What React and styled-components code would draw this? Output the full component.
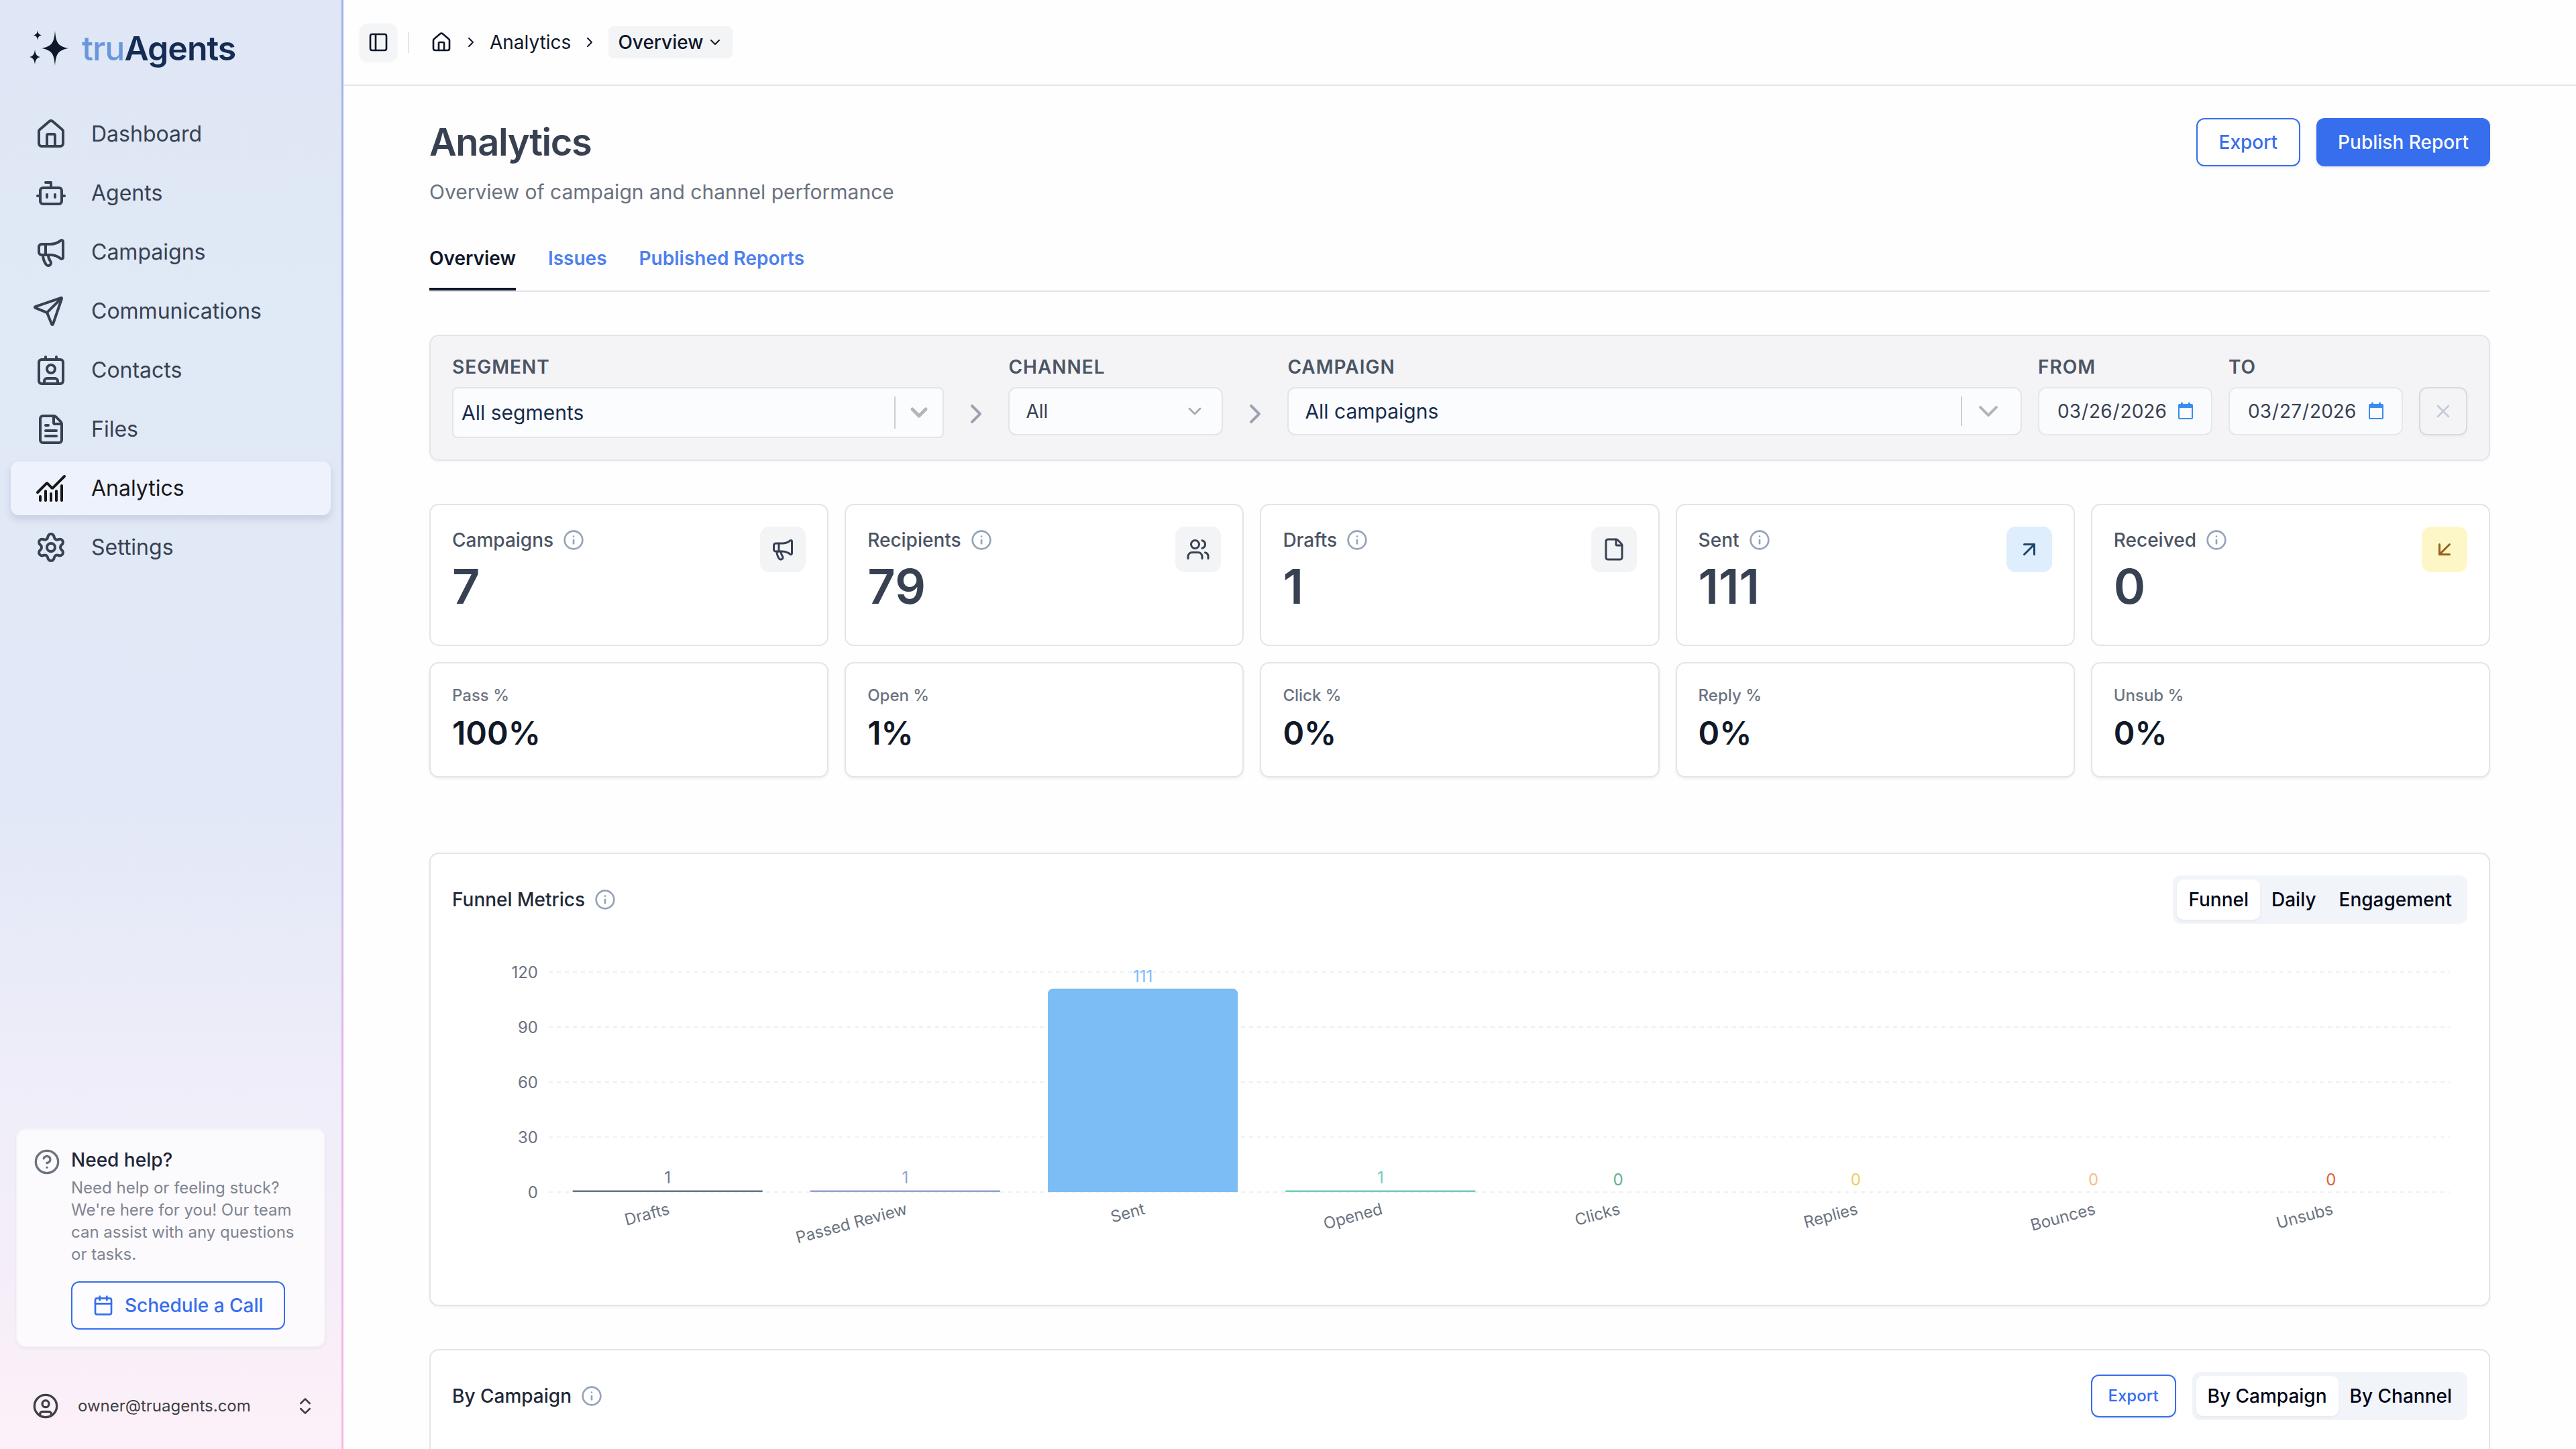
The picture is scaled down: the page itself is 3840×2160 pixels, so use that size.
import styled, { createGlobalStyle } from "styled-components";
import {
  ArrowDownLeft,
  ArrowUpRight,
  Bot,
  Calendar,
  ChartNoAxesCombined,
  ChevronDown,
  ChevronRight,
  ChevronsUpDown,
  CircleHelp,
  CircleUser,
  Contact,
  File,
  FileText,
  House,
  Info,
  Megaphone,
  PanelLeft,
  Send,
  Settings,
  Users,
  X,
} from "lucide-react";

const navItems = [
  { label: "Dashboard", icon: House },
  { label: "Agents", icon: Bot },
  { label: "Campaigns", icon: Megaphone },
  { label: "Communications", icon: Send, viewBox: "2 0 24 24" },
  { label: "Contacts", icon: Contact },
  { label: "Files", icon: FileText },
  { label: "Analytics", icon: ChartNoAxesCombined, active: true },
  { label: "Settings", icon: Settings },
];

const totals = [
  { label: "Campaigns", value: "7", icon: Megaphone },
  { label: "Recipients", value: "79", icon: Users },
  { label: "Drafts", value: "1", icon: File },
  { label: "Sent", value: "111", icon: ArrowUpRight, bg: "#deeefc", fg: "#1e4468" },
  { label: "Received", value: "0", icon: ArrowDownLeft, bg: "#fdf7c8", fg: "#97601f" },
];

const rates = [
  { label: "Pass %", value: "100%" },
  { label: "Open %", value: "1%" },
  { label: "Click %", value: "0%" },
  { label: "Reply %", value: "0%" },
  { label: "Unsub %", value: "0%" },
];

const funnel = [
  { label: "Drafts", value: 1, color: "#69748f" },
  { label: "Passed Review", value: 1, color: "#93a3cb" },
  { label: "Sent", value: 111, color: "#7cbdf5" },
  { label: "Opened", value: 1, color: "#70cdbb" },
  { label: "Clicks", value: 0, color: "#5cb48b" },
  { label: "Replies", value: 0, color: "#f2cb5c" },
  { label: "Bounces", value: 0, color: "#f5be84" },
  { label: "Unsubs", value: 0, color: "#dc5f3c" },
];

const ticks = [120, 90, 60, 30, 0];

export default function App() {
  return (
    <>
      <GlobalStyle />
      <Shell>
        <Sidebar />
        <Main>
          <Topbar />
          <Content>
            <PageHeader>
              <Title>Analytics</Title>
              <ButtonRow>
                <OutlineButton type="button">Export</OutlineButton>
                <PrimaryButton type="button">Publish Report</PrimaryButton>
              </ButtonRow>
            </PageHeader>
            <Subtitle>Overview of campaign and channel performance</Subtitle>
            <Tabs>
              <Tab href="#overview" $active>
                Overview
              </Tab>
              <Tab href="#issues">Issues</Tab>
              <Tab href="#reports">Published Reports</Tab>
            </Tabs>
            <Filters />
            <StatGrid>
              {totals.map((item) => (
                <TotalCard key={item.label} {...item} />
              ))}
              {rates.map((item) => (
                <RateCard key={item.label}>
                  <RateLabel>{item.label}</RateLabel>
                  <RateValue>{item.value}</RateValue>
                </RateCard>
              ))}
            </StatGrid>
            <FunnelPanel>
              <PanelHeader>
                <PanelTitle>
                  Funnel Metrics
                  <InfoIcon />
                </PanelTitle>
                <Segmented>
                  <SegmentButton type="button" $active>
                    Funnel
                  </SegmentButton>
                  <SegmentButton type="button">Daily</SegmentButton>
                  <SegmentButton type="button">Engagement</SegmentButton>
                </Segmented>
              </PanelHeader>
              <FunnelChart />
            </FunnelPanel>
            <CampaignPanel>
              <PanelHeader>
                <PanelTitle>
                  By Campaign
                  <InfoIcon />
                </PanelTitle>
                <ButtonRow>
                  <OutlineButton type="button" $small>
                    Export
                  </OutlineButton>
                  <Segmented>
                    <SegmentButton type="button" $active>
                      By Campaign
                    </SegmentButton>
                    <SegmentButton type="button">By Channel</SegmentButton>
                  </Segmented>
                </ButtonRow>
              </PanelHeader>
            </CampaignPanel>
          </Content>
        </Main>
      </Shell>
    </>
  );
}

function Sidebar() {
  return (
    <StyledSidebar>
      <Brand href="#home">
        <Sparkles />
        <BrandName>
          <span>tru</span>Agents
        </BrandName>
      </Brand>
      <Nav>
        {navItems.map(({ label, icon: Icon, active, viewBox = "0 0 24 24" }) => (
          <NavLink key={label} href={`#${label.toLowerCase()}`} $active={active}>
            <Icon size={48} viewBox={viewBox} overflow="visible" />
            {label}
          </NavLink>
        ))}
      </Nav>
      <NavDivider />
      <HelpCard>
        <CircleHelp size={40} />
        <HelpBody>
          <HelpTitle>Need help?</HelpTitle>
          <HelpText>
            Need help or feeling stuck? We're here for you! Our team can assist
            with any questions or tasks.
          </HelpText>
          <CallButton type="button">
            <Calendar size={32} />
            Schedule a Call
          </CallButton>
        </HelpBody>
      </HelpCard>
      <UserButton type="button">
        <CircleUser size={40} />
        <span>owner@truagents.com</span>
        <ChevronsUpDown size={32} />
      </UserButton>
    </StyledSidebar>
  );
}

function Sparkles() {
  return (
    <svg width="60" height="56" viewBox="0 0 60 56" fill="#0f172a" aria-hidden="true">
      <path d="M40 2C41.500 19 44 25 60 28C44 31 41.500 37 40 54C38.500 37 36 31 20 28C36 25 38.500 19 40 2Z" />
      <path d="M14 1C14.700 6 16 7.500 20 8.500C16 9.500 14.700 11 14 16C13.300 11 12 9.500 8 8.500C12 7.500 13.300 6 14 1Z" />
      <path d="M10 30C10.900 37 12.500 39.500 18 41C12.500 42.500 10.900 45 10 52C9.100 45 7.500 42.500 2 41C7.500 39.500 9.100 37 10 30Z" />
    </svg>
  );
}

function Topbar() {
  return (
    <StyledTopbar>
      <ToggleButton type="button" aria-label="Toggle sidebar">
        <PanelLeft size={32} />
      </ToggleButton>
      <TopbarDivider />
      <Breadcrumbs aria-label="Breadcrumb">
        <Crumb href="#home" aria-label="Home">
          <House size={32} />
        </Crumb>
        <ChevronRight size={24} />
        <Crumb href="#analytics">Analytics</Crumb>
        <ChevronRight size={24} />
        <CrumbButton type="button">
          Overview
          <ChevronDown size={24} />
        </CrumbButton>
      </Breadcrumbs>
    </StyledTopbar>
  );
}

function Filters() {
  return (
    <FilterBar>
      <Field>
        <FieldLabel htmlFor="segment">Segment</FieldLabel>
        <SelectBox $tall>
          <Select id="segment" $large>
            <option>All segments</option>
          </Select>
          <SelectDivider />
          <SelectArrow $before={15} $after={15} $color="#b4b6ba">
            <ChevronDown size={40} strokeWidth={3} />
          </SelectArrow>
        </SelectBox>
      </Field>
      <FilterArrow>
        <ChevronRight size={48} />
      </FilterArrow>
      <Field>
        <FieldLabel htmlFor="channel">Channel</FieldLabel>
        <SelectBox $padded>
          <Select id="channel">
            <option>All</option>
          </Select>
          <SelectArrow $before={24} $after={24} $color="#a3a9b4">
            <ChevronDown size={32} />
          </SelectArrow>
        </SelectBox>
      </Field>
      <FilterArrow>
        <ChevronRight size={48} />
      </FilterArrow>
      <Field>
        <FieldLabel htmlFor="campaign">Campaign</FieldLabel>
        <SelectBox $padded>
          <Select id="campaign" $large>
            <option>All campaigns</option>
          </Select>
          <SelectDivider />
          <SelectArrow $before={15} $after={24} $color="#b4b6ba">
            <ChevronDown size={48} />
          </SelectArrow>
        </SelectBox>
      </Field>
      <DateField id="from" label="From" value="2026-03-26" />
      <DateField id="to" label="To" value="2026-03-27" />
      <ClearButton type="button" aria-label="Clear dates" disabled>
        <X size={32} />
      </ClearButton>
    </FilterBar>
  );
}

function DateField({ id, label, value }) {
  return (
    <Field>
      <FieldLabel htmlFor={id}>{label}</FieldLabel>
      <DateBox>
        <DateInput id={id} type="date" defaultValue={value} />
        <svg width="24" height="26" viewBox="0 0 24 26" fill="#3b8cf1" aria-hidden="true">
          <path d="M5 0h3v2h8V0h3v2h2a2 2 0 0 1 2 2v19a2 2 0 0 1-2 2H3a2 2 0 0 1-2-2V4a2 2 0 0 1 2-2h2zM3 8v15h18V8z" />
        </svg>
      </DateBox>
    </Field>
  );
}

function TotalCard({ label, value, icon: Icon, bg, fg }) {
  return (
    <StyledTotalCard>
      <div>
        <TotalLabel>
          {label}
          <InfoIcon />
        </TotalLabel>
        <TotalValue>{value}</TotalValue>
      </div>
      <IconBadge $bg={bg} $fg={fg}>
        <Icon size={36} />
      </IconBadge>
    </StyledTotalCard>
  );
}

function InfoIcon() {
  return <Info size={32} color="#94a3b8" aria-label="More information" />;
}

function FunnelChart() {
  const top = 40;
  const bottom = 368;
  const slot = 100 / funnel.length;
  const scale = (value) => bottom - ((bottom - top) * value) / 120;

  return (
    <ChartArea>
      <ChartSvg role="img" aria-label="Funnel metrics bar chart">
        {ticks.map((tick) => (
          <g key={tick}>
            <line
              x1="0"
              x2="100%"
              y1={scale(tick)}
              y2={scale(tick)}
              stroke="#eef0f2"
              strokeWidth="2"
              strokeDasharray="6 6"
            />
            <text x="-16" y={scale(tick) + 9} textAnchor="end">
              {tick}
            </text>
          </g>
        ))}
        {funnel.map(({ label, value, color }, index) => {
          const y = scale(value);
          const radius = value > 1 ? 8 : 0;
          return (
            <g key={label}>
              {value > 0 && (
                <svg
                  x={`${slot * (index + 0.1)}%`}
                  y={y}
                  width={`${slot * 0.8}%`}
                  height={bottom - y}
                >
                  <rect
                    width="100%"
                    height={bottom - y + radius}
                    rx={radius}
                    fill={color}
                  />
                </svg>
              )}
              <svg x={`${slot * (index + 0.5)}%`} y={y} overflow="visible">
                <text y="-10" textAnchor="middle" fill={color}>
                  {value}
                </text>
              </svg>
              <svg x={`${slot * (index + 0.5)}%`} y={bottom + 16} overflow="visible">
                <text y="17" textAnchor="end" transform="rotate(-15)">
                  {label}
                </text>
              </svg>
            </g>
          );
        })}
      </ChartSvg>
    </ChartArea>
  );
}

const GlobalStyle = createGlobalStyle`
  * {
    box-sizing: border-box;
  }

  body {
    margin: 0;
    background: #fefefe;
    color: #0f172a;
    font-family: Inter, "Liberation Sans", sans-serif;
    font-size: 28px;
    line-height: 40px;
  }

  button, input, select {
    font: inherit;
    color: inherit;
    margin: 0;
  }

  a {
    color: inherit;
    text-decoration: none;
  }

  svg {
    flex-shrink: 0;
  }
`;

const Shell = styled.div`
  display: flex;
  height: 100vh;
`;

const StyledSidebar = styled.aside`
  width: 512px;
  flex-shrink: 0;
  display: flex;
  flex-direction: column;
  border-right: 3px solid;
  border-image: linear-gradient(#9db4e8, #b9b6ec 35%, #e6b8e8 78%, #f5b9e0) 1;
  background: linear-gradient(
    #dfe6f5,
    #e0e9f6 22%,
    #e2e8f7 55%,
    #f0eef9 77%,
    #f6eef8 90%,
    #fdf1f9
  );
`;

const Brand = styled.a`
  display: flex;
  align-items: center;
  gap: 20px;
  height: 144px;
  padding-left: 42px;
`;

const BrandName = styled.span`
  font-size: 50px;
  font-weight: 600;
  letter-spacing: -1px;
  color: #152c54;

  span {
    font-weight: 500;
    color: #6a97dc;
  }
`;

const Nav = styled.nav`
  display: flex;
  flex-direction: column;
  gap: 8px;
  padding: 16px 16px 0;
`;

const NavLink = styled.a`
  display: flex;
  align-items: center;
  gap: 36px;
  height: 80px;
  padding-left: 36px;
  border-radius: 12px;
  font-size: 32px;
  color: ${({ $active }) => ($active ? "#18181b" : "#374151")};
  background: ${({ $active }) => ($active ? "#eef2fc" : "transparent")};
  box-shadow: ${({ $active }) =>
    $active ? "0 6px 12px rgba(30, 41, 80, 0.14)" : "none"};
`;

const NavDivider = styled.div`
  height: 2px;
  margin: 16px 16px auto;
  background: #e6e5ef;
`;

const HelpCard = styled.section`
  display: flex;
  gap: 16px;
  margin: 0 24px;
  padding: 28px 24px 24px;
  border: 2px solid #f5f3f8;
  border-radius: 14px;
  background: rgba(255, 255, 255, 0.7);
  box-shadow: 0 2px 4px rgba(60, 40, 80, 0.06);
  color: #6b7280;
`;

const HelpBody = styled.div`
  flex: 1;
`;

const HelpTitle = styled.h2`
  margin: 0 0 8px;
  font-size: 28px;
  font-weight: 500;
  line-height: 34px;
  color: #1f2638;
`;

const HelpText = styled.p`
  margin: 0 0 24px;
  font-size: 24px;
  line-height: 33px;
  color: #7f8490;
`;

const CallButton = styled.button`
  display: flex;
  align-items: center;
  gap: 16px;
  height: 72px;
  padding: 0 30px;
  border: 2px solid #366eed;
  border-radius: 12px;
  background: rgba(255, 255, 255, 0.4);
  color: #366eed;
  font-weight: 500;
  white-space: nowrap;
`;

const UserButton = styled.button`
  display: flex;
  align-items: center;
  gap: 28px;
  height: 128px;
  margin-top: 24px;
  padding: 0 38px 0 48px;
  border: none;
  background: none;
  color: #3f3f46;
  font-size: 24px;

  span {
    flex: 1;
    text-align: left;
  }
`;

const Main = styled.main`
  flex: 1;
  min-width: 0;
  display: flex;
  flex-direction: column;
`;

const StyledTopbar = styled.header`
  display: flex;
  align-items: center;
  flex-shrink: 0;
  gap: 16px;
  height: 128px;
  padding-left: 24px;
  border-bottom: 2px solid #e2e6ea;
`;

const ToggleButton = styled.button`
  display: flex;
  align-items: center;
  justify-content: center;
  width: 56px;
  height: 56px;
  border: none;
  border-radius: 12px;
  background: #f4f5f7;
  box-shadow: 0 2px 4px rgba(0, 0, 0, 0.04);
`;

const TopbarDivider = styled.div`
  width: 2px;
  height: 32px;
  background: #e2e6ea;
`;

const Breadcrumbs = styled.nav`
  display: flex;
  align-items: center;
  gap: 16px;
  padding-left: 16px;
`;

const Crumb = styled.a`
  display: flex;
`;

const CrumbButton = styled.button`
  display: flex;
  align-items: center;
  gap: 6px;
  height: 48px;
  padding: 0 14px;
  border: none;
  border-radius: 8px;
  background: #f3f4f6;
  font-weight: 500;
`;

const Content = styled.div`
  flex: 1;
  overflow-y: auto;
  scrollbar-width: none;
  padding: 48px 128px;
`;

const PageHeader = styled.div`
  display: flex;
  align-items: center;
  justify-content: space-between;
`;

const Title = styled.h1`
  margin: 0;
  font-size: 56px;
  font-weight: 600;
  line-height: 72px;
  letter-spacing: -0.025em;
  color: #374151;
`;

const Subtitle = styled.p`
  margin: 16px 0 0;
  font-size: 30px;
  line-height: 44px;
  color: #6b7280;
`;

const ButtonRow = styled.div`
  display: flex;
  align-items: center;
  gap: 24px;
`;

const OutlineButton = styled.button`
  height: ${({ $small }) => ($small ? "64px" : "72px")};
  padding: ${({ $small }) => ($small ? "0 24px" : "0 32px")};
  border: 2px solid #366eed;
  border-radius: 12px;
  background: #ffffff;
  box-shadow: 0 2px 4px rgba(0, 0, 0, 0.06);
  color: #366eed;
  font-size: ${({ $small }) => ($small ? "24px" : "28px")};
  font-weight: 500;
`;

const PrimaryButton = styled.button`
  height: 72px;
  padding: 0 32px;
  border: none;
  border-radius: 12px;
  background: #366eed;
  box-shadow: 0 2px 4px rgba(0, 0, 0, 0.1);
  color: #f8fafc;
  font-weight: 500;
`;

const Tabs = styled.nav`
  display: flex;
  gap: 48px;
  margin-top: 57px;
  border-bottom: 2px solid #e1e4e8;
`;

const Tab = styled.a`
  padding-bottom: 24px;
  border-bottom: 4px solid ${({ $active }) => ($active ? "#0f172a" : "transparent")};
  color: ${({ $active }) => ($active ? "#0f172a" : "#4d80f0")};
  font-weight: 600;
`;

const FilterBar = styled.section`
  display: grid;
  grid-template-columns: 67fr 48px 320px 48px 100fr 260px 260px 72px;
  gap: 24px;
  margin-top: 64px;
  padding: 32px;
  border: 2px solid #e2e5ea;
  border-radius: 14px;
  background: #f4f4f7;
  box-shadow: 0 2px 4px rgba(0, 0, 0, 0.04);
`;

const Field = styled.div`
  min-width: 0;
`;

const FieldLabel = styled.label`
  display: block;
  margin-bottom: 16px;
  font-size: 28px;
  font-weight: 600;
  line-height: 28px;
  letter-spacing: 1px;
  text-transform: uppercase;
  color: #4b5563;
`;

const SelectBox = styled.div`
  display: flex;
  align-items: center;
  height: ${({ $tall }) => ($tall ? "76px" : "72px")};
  padding-left: ${({ $padded }) => ($padded ? "24px" : "12px")};
  border: 2px solid #e0e4ec;
  border-radius: ${({ $tall }) => ($tall ? "8px" : "12px")};
  background: #fbfcfe;
`;

const Select = styled.select`
  flex: 1;
  min-width: 0;
  padding: 0;
  border: none;
  outline: none;
  appearance: none;
  background: none;
  font-size: ${({ $large }) => ($large ? "30px" : "28px")};
  color: ${({ $large }) => ($large ? "#172b4d" : "#374151")};
`;

const SelectDivider = styled.div`
  align-self: stretch;
  width: 2px;
  margin: 12px 0;
  background: #cccfd3;
`;

const SelectArrow = styled.span`
  display: flex;
  padding-left: ${({ $before }) => $before}px;
  padding-right: ${({ $after }) => $after}px;
  color: ${({ $color }) => $color};
  pointer-events: none;
`;

const FilterArrow = styled.span`
  display: flex;
  align-self: end;
  padding-bottom: 12px;
  color: #9ca3af;
`;

const DateBox = styled.div`
  display: flex;
  align-items: center;
  height: 72px;
  padding: 0 26px;
  border: 2px solid #e2e8f0;
  border-radius: 12px;
  background: #fafbfd;
`;

const DateInput = styled.input`
  flex: 1;
  min-width: 0;
  padding: 0;
  border: none;
  outline: none;
  background: none;
  color: #374151;

  &::-webkit-calendar-picker-indicator {
    display: none;
  }

  &::-webkit-datetime-edit {
    padding: 0;
  }
`;

const ClearButton = styled.button`
  display: flex;
  align-items: center;
  justify-content: center;
  height: 72px;
  margin-top: 44px;
  padding: 0;
  border: 2px solid #d8dade;
  border-radius: 12px;
  background: #f4f4f6;
  box-shadow: 0 2px 4px rgba(0, 0, 0, 0.04);
  color: #c4cbd5;
`;

const StatGrid = styled.section`
  display: grid;
  grid-template-columns: repeat(5, 1fr);
  gap: 24px;
  margin-top: 64px;
`;

const Card = styled.section`
  border: 2px solid #e2e5e9;
  border-radius: 14px;
  background: #ffffff;
`;

const StyledTotalCard = styled(Card)`
  display: flex;
  align-items: flex-start;
  justify-content: space-between;
  padding: 32px 32px 42px;
`;

const TotalLabel = styled.div`
  display: flex;
  align-items: center;
  gap: 14px;
  margin-bottom: 4px;
  font-size: 28px;
  font-weight: 500;
  color: #4b5563;
`;

const TotalValue = styled.div`
  font-size: 72px;
  font-weight: 600;
  line-height: 90px;
  color: #374151;
`;

const IconBadge = styled.span`
  display: flex;
  padding: 16px;
  border-radius: 14px;
  background: ${({ $bg }) => $bg || "#f3f4f6"};
  color: ${({ $fg }) => $fg || "#374151"};
`;

const RateCard = styled(Card)`
  padding: 32px;
  box-shadow: 0 2px 4px rgba(0, 0, 0, 0.06);
`;

const RateLabel = styled.div`
  margin-bottom: 8px;
  font-size: 24px;
  font-weight: 500;
  line-height: 32px;
  color: #6b7280;
`;

const RateValue = styled.div`
  font-size: 48px;
  font-weight: 600;
  line-height: 64px;
  color: #111827;
`;

const FunnelPanel = styled(Card)`
  margin-top: 112px;
  padding: 32px;
  box-shadow: 0 2px 4px rgba(0, 0, 0, 0.05);
`;

const CampaignPanel = styled(Card)`
  min-height: 400px;
  margin-top: 64px;
  padding: 32px;
`;

const PanelHeader = styled.div`
  display: flex;
  align-items: center;
  justify-content: space-between;
`;

const PanelTitle = styled.h2`
  display: flex;
  align-items: center;
  gap: 14px;
  margin: 0;
  font-size: 28px;
  font-weight: 500;
  color: #1f2937;
`;

const Segmented = styled.div`
  display: flex;
  height: 72px;
  padding: 6px;
  border-radius: 12px;
  background: #f1f4f9;
`;

const SegmentButton = styled.button`
  padding: 0 17px;
  border: none;
  border-radius: 10px;
  background: ${({ $active }) => ($active ? "#ffffff" : "transparent")};
  box-shadow: ${({ $active }) => ($active ? "0 2px 4px rgba(0, 0, 0, 0.05)" : "none")};
  color: #020617;
  font-weight: 500;
`;

const ChartArea = styled.div`
  margin: 32px 26px 0 144px;
`;

const ChartSvg = styled.svg`
  display: block;
  width: 100%;
  height: 504px;
  overflow: visible;
  font-size: 24px;
  fill: #6b7280;
`;
